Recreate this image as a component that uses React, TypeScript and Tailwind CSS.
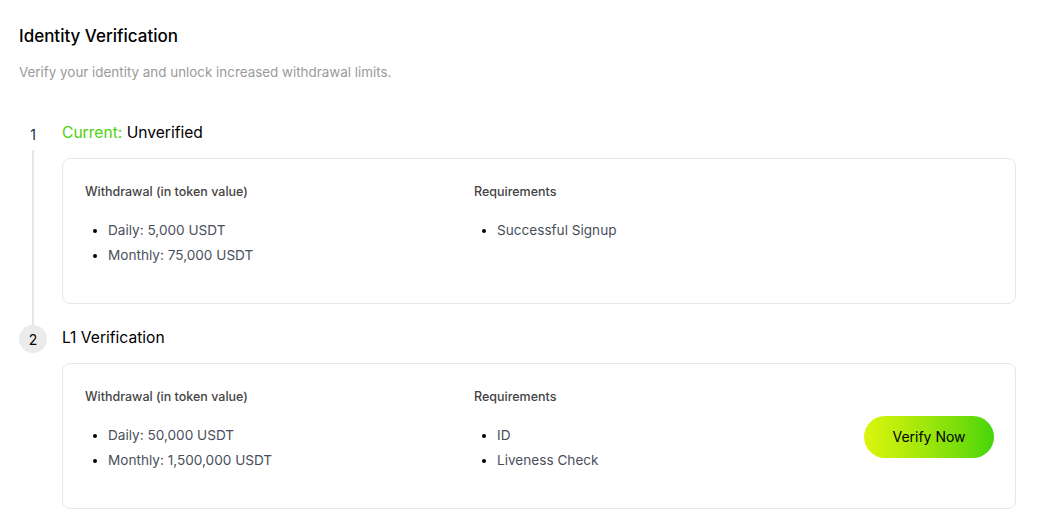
const STEPS = [
  {
    num: '1',
    label: 'Unverified',
    current: true,
    withdrawal: ['Daily: 5,000 USDT', 'Monthly: 75,000 USDT'],
    requirements: ['Successful Signup'],
    action: false,
  },
  {
    num: '2',
    label: 'L1 Verification',
    current: false,
    withdrawal: ['Daily: 50,000 USDT', 'Monthly: 1,500,000 USDT'],
    requirements: ['ID', 'Liveness Check'],
    action: true,
  },
];

export default function App() {
  return (
    <div className="min-h-screen bg-white px-[19px] pt-[22px] font-['Inter','Noto_Sans',sans-serif] text-black">
      <h1 className="text-[17px] font-medium leading-[28px]">Identity Verification</h1>
      <p className="mt-[12px] text-[13.4px] leading-[20px] text-[#9a9a9a]">
        Verify your identity and unlock increased withdrawal limits.
      </p>

      <div className="mt-[38px] w-[997px]">
        {STEPS.map((step, i) => {
          const last = i === STEPS.length - 1;
          return (
            <div key={step.num} className="flex">
              <div className="flex w-[28px] flex-col items-center">
                <div
                  className={`flex h-[28px] w-[28px] items-center justify-center rounded-full text-[14px] ${
                    step.current ? 'bg-white text-[#1a2a4a]' : 'bg-[#ebebeb] text-black'
                  }`}
                >
                  {step.num}
                </div>
                {!last && <div className="mt-[2px] w-[2px] flex-1 bg-[#e6e6e6]" />}
              </div>

              <div className={`ml-[15px] flex-1 ${last ? '' : 'pb-[21px]'}`}>
                <div className="pt-[1px] text-[15.6px] leading-[24px]">
                  {step.current ? (
                    <>
                      <span className="text-[#4fd10f]">Current:</span> {step.label}
                    </>
                  ) : (
                    step.label
                  )}
                </div>

                <div className="mt-[13px] flex items-center rounded-[8px] border border-[#e8e8e8] pb-[35px] pl-[22px] pr-[21px] pt-[23px]">
                  <div className="w-[389px] self-start">
                    <div className="text-[12.5px] font-medium leading-[20px] text-[#444]">Withdrawal (in token value)</div>
                    <ul className="mt-[16px] list-disc pl-[23px] text-[13.6px] leading-[25px] text-[#4a4f5c] marker:text-black">
                      {step.withdrawal.map((w) => (
                        <li key={w}>{w}</li>
                      ))}
                    </ul>
                  </div>
                  <div className="flex-1 self-start">
                    <div className="text-[12.5px] font-medium leading-[20px] text-[#444]">Requirements</div>
                    <ul className="mt-[16px] list-disc pl-[23px] text-[13.6px] leading-[25px] text-[#4a4f5c] marker:text-black">
                      {step.requirements.map((r) => (
                        <li key={r}>{r}</li>
                      ))}
                    </ul>
                  </div>
                  {step.action && (
                    <button className="mt-[13px] h-[42px] w-[130px] rounded-full bg-gradient-to-r from-[#dcf50c] to-[#42d50a] text-[14px] text-black">
                      Verify Now
                    </button>
                  )}
                </div>
              </div>
            </div>
          );
        })}
      </div>
    </div>
  );
}
